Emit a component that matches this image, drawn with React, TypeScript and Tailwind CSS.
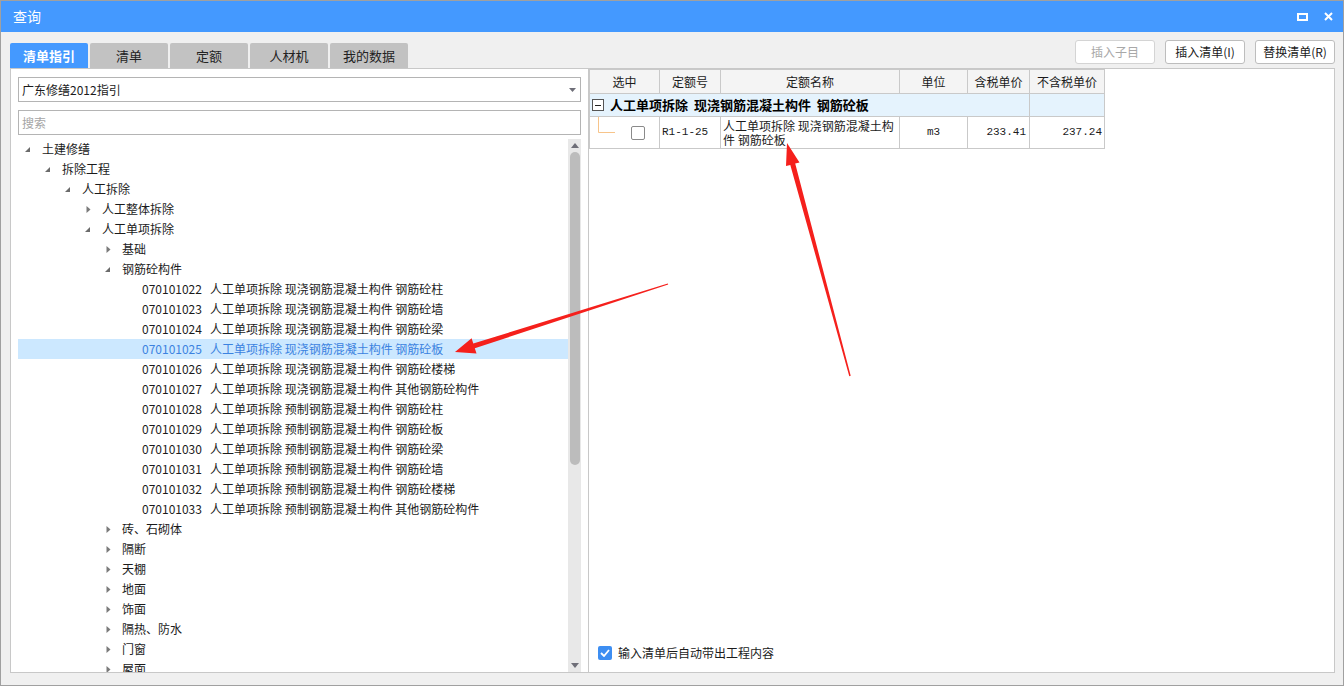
import React from 'react'

const FONT = "font-['Microsoft_YaHei','Noto_Sans_CJK_SC',sans-serif]"
const MONO = "font-['Liberation_Mono','Noto_Sans_CJK_SC',monospace]"

type TreeNode = { level: number; label: string; state: 'open' | 'closed' | 'leaf'; code?: string; selected?: boolean }

const indent = ['pl-0', 'pl-[20px]', 'pl-[40px]', 'pl-[60px]', 'pl-[80px]', 'pl-[100px]']

const leaves: [string, string, string][] = [
  ['070101022', '现浇', '钢筋砼柱'],
  ['070101023', '现浇', '钢筋砼墙'],
  ['070101024', '现浇', '钢筋砼梁'],
  ['070101025', '现浇', '钢筋砼板'],
  ['070101026', '现浇', '钢筋砼楼梯'],
  ['070101027', '现浇', '其他钢筋砼构件'],
  ['070101028', '预制', '钢筋砼柱'],
  ['070101029', '预制', '钢筋砼板'],
  ['070101030', '预制', '钢筋砼梁'],
  ['070101031', '预制', '钢筋砼墙'],
  ['070101032', '预制', '钢筋砼楼梯'],
  ['070101033', '预制', '其他钢筋砼构件'],
]

const tree: TreeNode[] = [
  { level: 0, label: '土建修缮', state: 'open' },
  { level: 1, label: '拆除工程', state: 'open' },
  { level: 2, label: '人工拆除', state: 'open' },
  { level: 3, label: '人工整体拆除', state: 'closed' },
  { level: 3, label: '人工单项拆除', state: 'open' },
  { level: 4, label: '基础', state: 'closed' },
  { level: 4, label: '钢筋砼构件', state: 'open' },
  ...leaves.map(([code, kind, name]) => ({
    level: 5,
    state: 'leaf' as const,
    code,
    label: `人工单项拆除 ${kind}钢筋混凝土构件 ${name}`,
    selected: code === '070101025',
  })),
  ...['砖、石砌体', '隔断', '天棚', '地面', '饰面', '隔热、防水', '门窗', '屋面'].map((label) => ({
    level: 4,
    label,
    state: 'closed' as const,
  })),
]

const Caret = ({ state }: { state: TreeNode['state'] }) => {
  if (state === 'leaf') return null
  if (state === 'open')
    return (
      <svg width="7" height="7" viewBox="0 0 7 7" className="ml-[6px]">
        <polygon points="6,1 6,6 1,6" fill="#6b6b6b" />
      </svg>
    )
  return (
    <svg width="7" height="9" viewBox="0 0 7 9" className="ml-[7px]">
      <polygon points="1.5,1 5.5,4.5 1.5,8" fill="#7a7a7a" />
    </svg>
  )
}

const TreeRow = ({ node }: { node: TreeNode }) => (
  <div
    className={`flex items-center h-[20px] shrink-0 text-[12px] leading-[20px] whitespace-nowrap ${indent[node.level]} ${
      node.selected ? 'bg-[#cce8ff] text-[#3b82e0]' : 'text-[#1b1b1b]'
    }`}
  >
    <div className="w-[24px] shrink-0 flex items-center">
      <Caret state={node.state} />
    </div>
    {node.code && <span>{node.code}</span>}
    <span className={node.code ? 'ml-[8px]' : ''}>{node.label}</span>
  </div>
)

const Button = ({ children, disabled }: { children: React.ReactNode; disabled?: boolean }) => (
  <button
    className={`h-[24px] w-[80px] rounded-[3px] border bg-white text-[12px] ${
      disabled ? 'border-[#d4d4d4] text-[#a8a8a8]' : 'border-[#bdbdbd] text-[#1b1b1b]'
    }`}
  >
    {children}
  </button>
)

const tabs = ['清单指引', '清单', '定额', '人材机', '我的数据']

export default function App() {
  return (
    <div className={`relative w-[1344px] h-[686px] border border-[#a0a0a0] bg-[#f0f0f0] flex flex-col overflow-hidden ${FONT}`}>
      {/* title bar */}
      <div className="h-[31px] shrink-0 bg-[#4499ff] flex items-center pl-[12px] pr-[10px]">
        <span className="text-white text-[14px]">查询</span>
        <div className="ml-auto flex items-center gap-[16px]">
          <div className="w-[11px] h-[8px] border-2 border-white" />
          <svg width="9" height="9" viewBox="0 0 9 9">
            <path d="M1 1 L8 8 M8 1 L1 8" stroke="#fff" strokeWidth="2" />
          </svg>
        </div>
      </div>

      {/* tabs + buttons */}
      <div className="h-[36px] shrink-0 flex items-end pl-[9px] pr-[8px]">
        <div className="flex gap-[2px]">
          {tabs.map((t, i) => (
            <div
              key={t}
              className={`w-[78px] h-[25px] rounded-t-[2px] flex items-center justify-center text-[13px] ${
                i === 0 ? 'bg-[#4499ff] text-white font-bold' : 'bg-[#c2c2c2] text-[#222]'
              }`}
            >
              {t}
            </div>
          ))}
        </div>
        <div className="ml-auto self-start mt-[8px] flex gap-[10px]">
          <Button disabled>插入子目</Button>
          <Button>插入清单(I)</Button>
          <Button>替换清单(R)</Button>
        </div>
      </div>

      {/* main */}
      <div className="flex-1 min-h-0 flex ml-[9px] mr-[8px]">
        {/* left panel */}
        <div className="w-[579px] shrink-0 bg-white border border-[#c8c8c8] flex flex-col px-[7px] pt-[8px]">
          <div className="h-[25px] shrink-0 border border-[#b4b4b4] flex items-center pl-[3px] pr-[4px] text-[12px] text-[#1b1b1b]">
            <span>广东修缮2012指引</span>
            <svg width="7" height="4" viewBox="0 0 7 4" className="ml-auto">
              <polygon points="0,0 7,0 3.5,4" fill="#6e6e78" />
            </svg>
          </div>
          <div className="h-[25px] shrink-0 mt-[8px] border border-[#b4b4b4] flex items-center pl-[3px] text-[12px] text-[#a5a5a5]">
            搜索
          </div>
          <div className="mt-[4px] flex-1 min-h-0 flex">
            <div className="flex-1 min-w-0 overflow-hidden flex flex-col">
              {tree.map((n, i) => (
                <TreeRow key={i} node={n} />
              ))}
            </div>
            <div className="w-[13px] shrink-0 bg-[#e8e8e8] flex flex-col items-center">
              <div className="h-[13px] flex items-center justify-center">
                <svg width="8" height="5" viewBox="0 0 8 5">
                  <polygon points="0,5 8,5 4,0" fill="#6e6e78" />
                </svg>
              </div>
              <div className="w-[10px] h-[313px] rounded-full bg-[#bcbcbc]" />
              <div className="flex-1" />
              <div className="h-[14px] flex items-center justify-center">
                <svg width="8" height="5" viewBox="0 0 8 5">
                  <polygon points="0,0 8,0 4,5" fill="#6e6e78" />
                </svg>
              </div>
            </div>
          </div>
        </div>

        {/* right panel */}
        <div className="flex-1 bg-white border border-l-0 border-[#c8c8c8] flex flex-col">
          <table className="table-fixed border-collapse w-[515px] text-[12px] text-[#1b1b1b]">
            <colgroup>
              <col className="w-[70px]" />
              <col className="w-[61px]" />
              <col className="w-[179px]" />
              <col className="w-[68px]" />
              <col className="w-[62px]" />
              <col className="w-[75px]" />
            </colgroup>
            <thead>
              <tr className="h-[24px] bg-[#f4f4f4]">
                {['选中', '定额号', '定额名称', '单位', '含税单价', '不含税单价'].map((h) => (
                  <th key={h} className="border border-[#c9c9c9] font-normal text-center p-0">
                    {h}
                  </th>
                ))}
              </tr>
            </thead>
            <tbody>
              <tr className="h-[23px] bg-[#e5f3fd]">
                <td colSpan={5} className="border border-[#c9c9c9] p-0">
                  <div className="flex items-center pl-[2px]">
                    <div className="w-[12px] h-[12px] border border-[#555] bg-white flex items-center justify-center">
                      <div className="w-[6px] h-px bg-[#222]" />
                    </div>
                    <span className="ml-[6px] font-bold text-[13px] whitespace-pre text-black">人工单项拆除  现浇钢筋混凝土构件  钢筋砼板</span>
                  </div>
                </td>
                <td className="border border-[#c9c9c9]" />
              </tr>
              <tr className="h-[32px]">
                <td className="border border-[#c9c9c9] p-0 relative">
                  <svg width="30" height="32" viewBox="0 0 30 32" className="absolute left-0 top-0">
                    <path d="M8.5 0 V15.5 H25" stroke="#f7c48a" strokeWidth="1" fill="none" />
                  </svg>
                  <div className="ml-[41px] w-[14px] h-[14px] rounded-[2px] border border-[#8a8a8a] bg-white" />
                </td>
                <td className={`border border-[#c9c9c9] pl-[2px] text-[11px] ${MONO}`}>R1-1-25</td>
                <td className="border border-[#c9c9c9] pl-[2px] pr-0 leading-[14px] text-[12px]">
                  人工单项拆除 现浇钢筋混凝土构
                  <br />件 钢筋砼板
                </td>
                <td className={`border border-[#c9c9c9] text-center text-[11px] ${MONO}`}>m3</td>
                <td className={`border border-[#c9c9c9] text-right pr-[3px] text-[11px] ${MONO}`}>233.41</td>
                <td className={`border border-[#c9c9c9] text-right pr-[2px] text-[11px] ${MONO}`}>237.24</td>
              </tr>
            </tbody>
          </table>
          <div className="flex-1" />
          <div className="flex items-center pl-[9px] pb-[10px]">
            <div className="w-[14px] h-[14px] rounded-[2px] bg-[#3d8ef2] flex items-center justify-center">
              <svg width="10" height="8" viewBox="0 0 10 8">
                <path d="M1 4 L4 7 L9 1" stroke="#fff" strokeWidth="1.8" fill="none" />
              </svg>
            </div>
            <span className="ml-[6px] text-[12px] text-[#1b1b1b]">输入清单后自动带出工程内容</span>
          </div>
        </div>
      </div>

      <div className="h-[12px] shrink-0" />

      {/* red annotation arrows */}
      <svg className="absolute left-[-1px] top-[-1px] pointer-events-none" width="1344" height="686" viewBox="0 0 1344 686">
        <polygon
          points="667.8,283.5 473.3,343.5 471.6,338.3 455,352 476.5,353.5 474.8,348.3 668.2,284.5"
          fill="#f5201c"
        />
        <polygon
          points="850.7,375.8 795.2,163.6 799.5,162.4 787,143 786,166.1 790.3,164.9 849.3,376.2"
          fill="#f5201c"
        />
      </svg>
    </div>
  )
}
